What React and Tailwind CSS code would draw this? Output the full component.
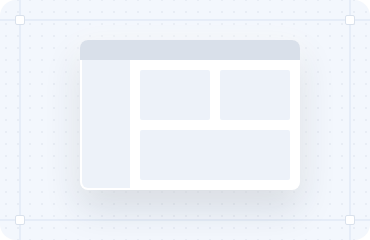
import React from 'react';

function Handle({ className }) {
  return (
    <div
      className={`absolute w-[10px] h-[10px] -ml-[5px] -mt-[5px] bg-white border border-[#d9e1ec] rounded-[2px] ${className}`}
    />
  );
}

export default function App() {
  return (
    <div className="w-[370px] h-[240px] bg-white">
      <div className="relative w-[370px] h-[240px] rounded-[16px] overflow-hidden bg-[#f3f7fd] bg-[radial-gradient(circle,#e8edf5_0.9px,transparent_1.1px)] bg-[size:12px_12px] bg-[position:0px_6px]">
        {/* guide lines */}
        <div className="absolute left-[19px] top-0 bottom-0 w-[2px] bg-[#e6edf8]" />
        <div className="absolute left-[349px] top-0 bottom-0 w-[2px] bg-[#e6edf8]" />
        <div className="absolute top-[19px] left-0 right-0 h-[2px] bg-[#e6edf8]" />
        <div className="absolute top-[219px] left-0 right-0 h-[2px] bg-[#e6edf8]" />

        <Handle className="left-[20px] top-[20px]" />
        <Handle className="left-[350px] top-[20px]" />
        <Handle className="left-[20px] top-[220px]" />
        <Handle className="left-[350px] top-[220px]" />

        <div className="relative pl-[80px] pt-[40px]">
          <div className="w-[220px] h-[150px] bg-white rounded-[8px] overflow-hidden flex flex-col shadow-[0_18px_36px_rgba(30,41,59,0.14),0_0_24px_rgba(255,255,255,0.9)]">
            <div className="h-[20px] bg-[#d9e0ea]" />
            <div className="flex-1 flex px-[2px] pb-[2px]">
              <div className="w-[48px] bg-[#edf2f9] rounded-bl-[6px]" />
              <div className="flex-1 pl-[10px] pr-[8px] pt-[10px] flex flex-col gap-[10px]">
                <div className="flex gap-[10px]">
                  <div className="w-[70px] h-[50px] bg-[#edf2f9] rounded-[2px]" />
                  <div className="w-[70px] h-[50px] bg-[#edf2f9] rounded-[2px]" />
                </div>
                <div className="w-[150px] h-[50px] bg-[#edf2f9] rounded-[2px]" />
              </div>
            </div>
          </div>
        </div>
      </div>
    </div>
  );
}
